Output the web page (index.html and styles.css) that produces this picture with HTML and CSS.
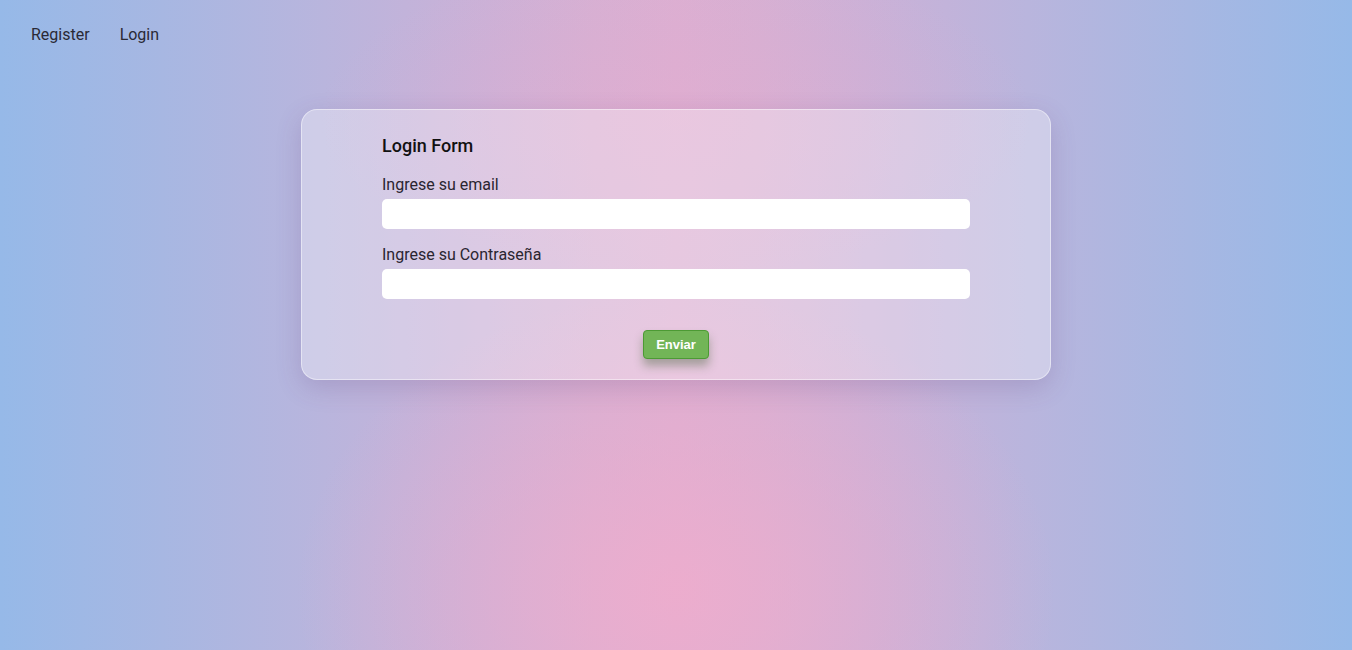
FILE: index.html
```html
<!DOCTYPE html>
<html lang="es">
<head>
<meta charset="utf-8">
<title>Login</title>
<link rel="stylesheet" href="styles.css">
</head>
<body>
<nav class="nav">
  <a class="nav-link" href="#">Register</a>
  <a class="nav-link" href="#">Login</a>
</nav>
<main class="main">
  <section class="card">
    <form class="form">
      <h2 class="title">Login Form</h2>
      <label class="label" for="email">Ingrese su email</label>
      <input class="input" id="email" type="email">
      <label class="label" for="pass">Ingrese su Contraseña</label>
      <input class="input" id="pass" type="password">
      <div class="actions">
        <button class="btn" type="button">Enviar</button>
      </div>
    </form>
  </section>
</main>
</body>
</html>
```

FILE: styles.css
```css
html, body {
  margin: 0;
  padding: 0;
  height: 100%;
}
body {
  font-family: Roboto, "Noto Sans", sans-serif;
  color: #222;
  background:
    radial-gradient(ellipse 380px 300px at 50% 91%, rgba(242, 172, 204, 0.75), rgba(242, 172, 204, 0) 100%),
    radial-gradient(ellipse 360px 160px at 50% 18%, rgba(232, 170, 206, 0.35), rgba(232, 170, 206, 0) 100%),
    linear-gradient(to right, #96b9e8 0%, #a7b7e2 12%, #b9b5dd 24%, #cbb1d7 36%, #d6b0d3 44%, #dbafd2 50%, #d6b0d3 56%, #cbb1d7 64%, #b9b5dd 76%, #a7b7e2 88%, #96b9e8 100%);
  background-color: #96b9e8;
  overflow: hidden;
}
.nav {
  display: flex;
  gap: 30px;
  padding: 25px 31px 0;
  height: 85px;
  box-sizing: border-box;
}
.nav-link {
  font-size: 16px;
  line-height: 20px;
  color: #2a2a35;
  text-decoration: none;
}
.main {
  display: flex;
  justify-content: center;
}
.card {
  width: 750px;
  box-sizing: border-box;
  border: 1px solid rgba(255, 255, 255, 0.45);
  border-radius: 16px;
  background: rgba(255, 255, 255, 0.32);
  box-shadow: 0 8px 26px rgba(90, 60, 120, 0.2);
  padding: 24px 80px 20px;
  margin-top: 24px;
}
.form {
  display: flex;
  flex-direction: column;
}
.title {
  margin: 0 0 17px;
  font-size: 18px;
  font-weight: 500;
  line-height: 24px;
  color: #111;
}
.label {
  font-size: 16px;
  line-height: 20px;
  color: #2a2530;
  margin-bottom: 4px;
}
.input {
  height: 30px;
  box-sizing: border-box;
  border: none;
  border-radius: 5px;
  background: #fff;
  margin: 0 0 16px;
  padding: 0 8px;
}
.actions {
  display: flex;
  justify-content: center;
  margin-top: 15px;
}
.btn {
  width: 66px;
  height: 29px;
  font-family: "Liberation Sans", Arial, sans-serif;
  font-size: 13px;
  font-weight: bold;
  color: #fff;
  background: #72b557;
  border: 1px solid #4c9a34;
  border-radius: 4px;
  box-shadow: 0 7px 10px rgba(40, 80, 30, 0.35);
  cursor: pointer;
}
```
